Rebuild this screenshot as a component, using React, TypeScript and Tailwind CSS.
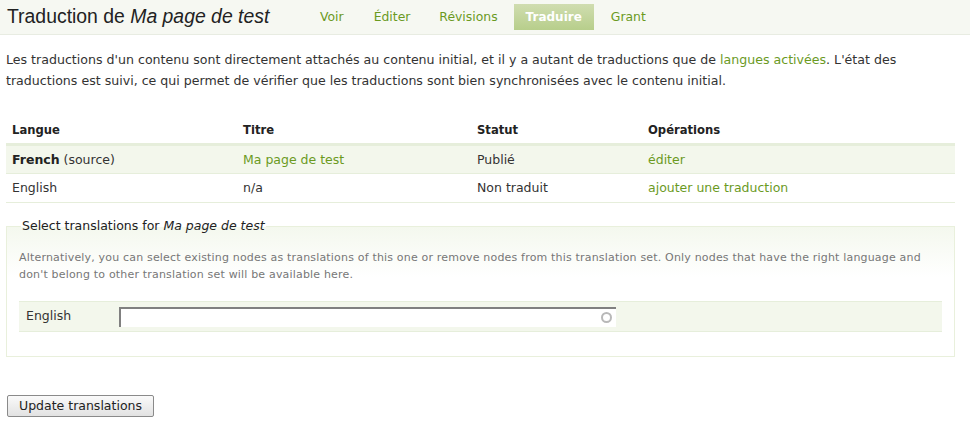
import React from 'react';

const green = 'text-[#6b9a1f]';

export default function App() {
  return (
    <div className="min-h-[426px] w-[970px] bg-white font-['DejaVu_Sans',sans-serif] text-[12.5px] text-[#333]">
      {/* Header with tabs */}
      <div className="flex h-[35px] items-center border-b border-[#e8ece2] bg-[#f6f8f2]">
        <h1 className="ml-[7px] w-[298px] font-['Liberation_Sans',Arial,sans-serif] text-[19.4px] leading-none text-[#222]">
          Traduction de <em>Ma page de test</em>
        </h1>
        <nav className="flex items-center text-[12.4px]">
          <a className={`px-[15px] py-[4px] ${green}`}>Voir</a>
          <a className={`px-[15px] py-[4px] ${green}`}>Éditer</a>
          <a className={`px-[14px] py-[4px] ${green}`}>Révisions</a>
          <a className="mx-[2px] bg-gradient-to-b from-[#d0ddb0] to-[#b7ce8b] px-[12px] py-[4px] text-[12px] font-bold text-white">Traduire</a>
          <a className={`px-[15px] py-[4px] ${green}`}>Grant</a>
        </nav>
      </div>

      <p className="mx-[6px] mt-[14px] w-[900px] text-[12.6px] leading-[21px]">
        Les traductions d'un contenu sont directement attachés au contenu initial, et il y a autant de traductions que de{' '}
        <a className={green}>langues activées</a>. L'état des traductions est suivi, ce qui permet de vérifier que les traductions sont bien synchronisées avec le contenu initial.
      </p>

      {/* Translations table */}
      <table className="mx-[6px] mt-[31px] w-[949px] border-collapse text-left">
        <thead>
          <tr className="border-b-[3px] border-[#e6eedb] text-[11.6px]">
            <th className="w-[231px] px-[6px] pb-[4px] font-bold text-[#222]">Langue</th>
            <th className="w-[234px] px-[6px] pb-[4px] font-bold text-[#222]">Titre</th>
            <th className="w-[171px] px-[6px] pb-[4px] font-bold text-[#222]">Statut</th>
            <th className="px-[6px] pb-[4px] font-bold text-[#222]">Opérations</th>
          </tr>
        </thead>
        <tbody>
          <tr className="h-[29px] border-b border-[#e6eedb] bg-[#f3f7ec]">
            <td className="px-[6px]"><strong className="text-[#222]">French</strong> (source)</td>
            <td className={`px-[6px] ${green}`}>Ma page de test</td>
            <td className="px-[6px]">Publié</td>
            <td className={`px-[6px] ${green}`}>éditer</td>
          </tr>
          <tr className="h-[29px] border-b border-[#e6eedb]">
            <td className="px-[6px]">English</td>
            <td className="px-[6px]">n/a</td>
            <td className="px-[6px]">Non traduit</td>
            <td className={`px-[6px] ${green}`}>ajouter une traduction</td>
          </tr>
        </tbody>
      </table>

      {/* Fieldset */}
      <fieldset className="mx-[6px] mt-[14px] h-[140px] w-[949px] border border-[#e9f0dc] bg-gradient-to-b from-[#f4f8ee] to-white to-[50px] px-[12px] pt-[6px]">
        <legend className="ml-[2px] px-[1px] text-[#222]">
          Select translations for <em>Ma page de test</em>
        </legend>
        <p className="mt-[7px] text-[11px] leading-[17px] tracking-[0.18px] text-[#777]">
          Alternatively, you can select existing nodes as translations of this one or remove nodes from this translation set. Only nodes that have the right language and don't belong to other translation set will be available here.
        </p>
        <div className="mt-[18px] flex h-[31px] items-center border-y border-[#e6eedb] bg-[#f3f7ec]">
          <label className="w-[100px] pl-[7px]">English</label>
          <div className="relative h-[20px] w-[497px] border-l-2 border-t-2 border-[#808080] bg-white">
            <span className="absolute right-[4px] top-[3px] h-[11px] w-[11px] rounded-full border-2 border-[#b8b8b8]" />
          </div>
        </div>
      </fieldset>

      <button className="ml-[7px] mt-[38px] h-[22px] rounded-[2px] border border-[#8a8a8a] bg-gradient-to-b from-[#fafafa] to-[#e2e2e2] px-[11px] text-[12.5px] text-[#222]">
        Update translations
      </button>
    </div>
  );
}
